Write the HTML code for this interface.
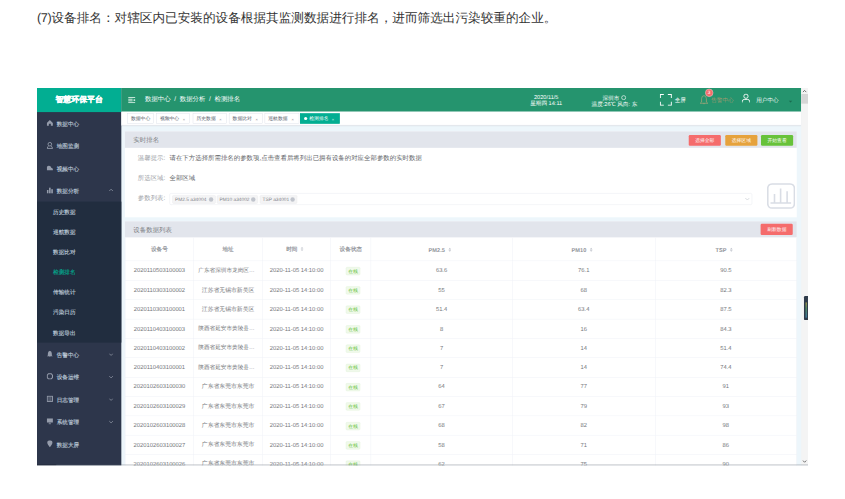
<!DOCTYPE html>
<html><head><meta charset="utf-8">
<style>
*{margin:0;padding:0;box-sizing:border-box}
html,body{width:845px;height:499px;overflow:hidden;background:#fff;font-family:"Liberation Sans",sans-serif;text-rendering:geometricPrecision}
#title{position:absolute;left:37px;top:9.5px;font-size:12.63px;line-height:17px;color:#333;white-space:nowrap}
#ui{position:absolute;left:37px;top:88px;width:1920px;height:940px;transform:scale(0.40156);transform-origin:0 0;overflow:hidden;background:#edf6fb}
.abs{position:absolute}
#side{left:0;top:0;width:210px;height:940px;background:#2d364b}
#logo{left:0;top:0;width:210px;height:60px;background:#02ae92;color:#fff;font-size:19.7px;font-weight:bold;text-align:center;line-height:59px;-webkit-text-stroke:0.7px #fff}
.mi{position:absolute;left:0;width:210px;height:56px;line-height:60px;color:#bfcbd9;font-size:14px;padding-left:49px;white-space:nowrap;-webkit-text-stroke:0.35px #bfcbd9}
.mi .ic{position:absolute;left:24px;line-height:0}
.mi .arr{position:absolute;left:179px;top:23px;line-height:0}
#sub{left:0;top:283px;width:210px;height:351px;background:#212d3f}
.si{position:absolute;left:0;width:210px;height:50px;line-height:53px;color:#bfcbd9;font-size:14px;padding-left:40px;-webkit-text-stroke:0.35px currentColor}
#hdr{left:210px;top:0;width:1693px;height:58.5px;background:#25946e;color:#fff;white-space:nowrap}
#hdr .t{position:absolute;font-size:14px;line-height:15.2px;text-align:center}
#sb{left:1903px;top:0;width:17px;height:940px;background:#f4f4f4}
#tags{left:210px;top:58.5px;width:1693px;height:34px;background:#fff;border-bottom:1px solid #d8dce5;box-shadow:0 1px 3px 0 rgba(0,0,0,.08)}
.tag{position:absolute;top:4px;height:26px;line-height:24px;border:1px solid #d8dce5;color:#495060;background:#fff;font-size:12px;padding:0 0 0 8px;white-space:nowrap}
.tag .x{position:absolute;top:3px;width:16px;text-align:center;font-size:10px;color:#888}
.card{position:absolute;left:219px;width:1673px;background:#fff}
.chd{position:absolute;left:0;top:0;width:100%;height:40.5px;background:#e2e5ec;color:#7a7d82;font-size:16px;line-height:43px;padding-left:21px}
.btn{position:absolute;top:8.5px;width:80px;height:27.4px;border-radius:3px;color:#fff;font-size:12px;line-height:27.4px;text-align:center}
.lbl{position:absolute;left:32px;font-size:16px;color:#a0a3a8;line-height:20px}
.val{position:absolute;left:111px;font-size:16px;color:#606266;line-height:20px;white-space:nowrap}
#sel{position:absolute;left:110.6px;top:153.4px;width:1451px;height:29px;border:1px solid #e4e7ed;border-radius:4px}
.chip{position:absolute;top:4px;height:21px;background:#f4f4f5;border:1px solid #e9e9eb;border-radius:3px;color:#7f8287;font-size:12px;line-height:19px;padding-left:6px;white-space:nowrap}
.chip i{position:absolute;top:4px;width:11px;height:11px;border-radius:50%;background:#c0c4cc}
table{position:absolute;left:0;top:41px;border-collapse:collapse;table-layout:fixed;width:1673px}
td,th{border:1px solid #ebeef5;border-top:0;text-align:center;font-size:14px;color:#606266;font-weight:normal;white-space:nowrap;overflow:hidden;padding:0}
th{height:58.3px;color:#909399;padding-top:2px;-webkit-text-stroke:0.4px #909399}
th.s{font-weight:bold;-webkit-text-stroke:0}
td{height:48.2px;font-size:14.5px;color:#74767a;padding-top:0}
td.ad{text-align:left;padding:0 10px 0 11px;text-overflow:ellipsis;font-size:14px}
.on{display:inline-block;position:relative;left:6px;top:1px;height:20px;line-height:18px;padding:0 5px;border:1px solid #e1f3d8;background:#f0f9eb;color:#67c23a;font-size:12px;border-radius:3px}
.sort{display:inline-block;vertical-align:middle;margin-left:7px;margin-right:7px;margin-top:-2px}
</style></head><body>
<div id="title"><span style="letter-spacing:-0.35px">(7)</span>设备排名：对辖区内已安装的设备根据其监测数据进行排名，进而筛选出污染较重的企业。</div>
<div id="ui">
  <div id="side" class="abs">
    <div id="logo" class="abs">智慧环保平台</div>
<div class="mi" style="top:59px"><span class="ic" style="top:20px"><svg width="16" height="16" viewBox="0 0 16 16"><path d="M8 1 L15.5 8 L15.5 15 L10.5 15 L10.5 10 L5.5 10 L5.5 15 L0.5 15 L0.5 8Z" fill="#959cab"/></svg></span>数据中心</div>
<div class="mi" style="top:115px"><span class="ic" style="top:19px"><svg width="16" height="18" viewBox="0 0 16 18"><circle cx="8" cy="6" r="4.5" fill="none" stroke="#959cab" stroke-width="2.2"/><path d="M1.5 17 Q2 11 5 10.5 M14.5 17 Q14 11 11 10.5 M1.5 16.5 H14.5" fill="none" stroke="#959cab" stroke-width="2.2"/></svg></span>地图监测</div>
<div class="mi" style="top:171px"><span class="ic" style="top:20px"><svg width="16" height="16" viewBox="0 0 16 16"><path d="M0.5 14 L0.5 6 Q3 1.5 8 3 Q11 4 11 7 L15.5 10 L15.5 14Z" fill="#959cab"/></svg></span>视频中心</div>
<div class="mi" style="top:227px"><span class="ic" style="top:20px"><svg width="16" height="16" viewBox="0 0 16 16"><rect x="0.5" y="7" width="4" height="9" fill="#959cab"/><rect x="6" y="1" width="4" height="15" fill="#959cab"/><rect x="11.5" y="5" width="4" height="11" fill="#959cab"/></svg></span>数据分析<span class="arr"><svg width="11" height="8" viewBox="0 0 11 8"><path d="M1 6.5 L5.5 2 L10 6.5" fill="none" stroke="#959cab" stroke-width="1.8"/></svg></span></div>
<div id="sub" class="abs"><div class="si" style="top:0px">历史数据</div><div class="si" style="top:50px">巡航数据</div><div class="si" style="top:100px">数据比对</div><div class="si" style="top:150px;color:#02ae92">检测排名</div><div class="si" style="top:200px">传输统计</div><div class="si" style="top:250px">污染日历</div><div class="si" style="top:300px">数据导出</div></div>
<div class="mi" style="top:634px"><span class="ic" style="top:20px"><svg width="16" height="16" viewBox="0 0 16 16"><path d="M8 0.5 Q13 1.5 13 8 L13 12 L15.5 14 L0.5 14 L3 12 L3 8 Q3 1.5 8 0.5Z M6 14.5 L10 14.5 L8 16Z" fill="#959cab"/></svg></span>告警中心<span class="arr"><svg width="11" height="11" viewBox="0 0 11 11"><path d="M1 4.5 L5.5 9 L10 4.5" fill="none" stroke="#959cab" stroke-width="1.8"/></svg></span></div>
<div class="mi" style="top:690px"><span class="ic" style="top:20px"><svg width="16" height="16" viewBox="0 0 16 16"><path d="M4.5 1.5 H11.5 L14.5 5 V11 L11.5 14.5 H4.5 L1.5 11 V5Z" fill="none" stroke="#959cab" stroke-width="2.6"/></svg></span>设备运维<span class="arr"><svg width="11" height="11" viewBox="0 0 11 11"><path d="M1 4.5 L5.5 9 L10 4.5" fill="none" stroke="#959cab" stroke-width="1.8"/></svg></span></div>
<div class="mi" style="top:746px"><span class="ic" style="top:20px"><svg width="16" height="16" viewBox="0 0 16 16"><rect x="1.5" y="1.5" width="13" height="13" fill="none" stroke="#959cab" stroke-width="2.4"/><path d="M6 2 V14 M10.5 2 V14" stroke="#959cab" stroke-width="1.6"/></svg></span>日志管理<span class="arr"><svg width="11" height="11" viewBox="0 0 11 11"><path d="M1 4.5 L5.5 9 L10 4.5" fill="none" stroke="#959cab" stroke-width="1.8"/></svg></span></div>
<div class="mi" style="top:802px"><span class="ic" style="top:20px"><svg width="16" height="16" viewBox="0 0 16 16"><rect x="0.5" y="1" width="15" height="10" fill="#959cab"/><path d="M5 14.5 H11 M8 11 V14" stroke="#959cab" stroke-width="2"/></svg></span>系统管理<span class="arr"><svg width="11" height="11" viewBox="0 0 11 11"><path d="M1 4.5 L5.5 9 L10 4.5" fill="none" stroke="#959cab" stroke-width="1.8"/></svg></span></div>
<div class="mi" style="top:858px"><span class="ic" style="top:19px"><svg width="16" height="18" viewBox="0 0 16 18"><path d="M8 17.5 Q2 11 1.5 7 Q1.5 0.5 8 0.5 Q14.5 0.5 14.5 7 Q14 11 8 17.5Z" fill="#959cab"/></svg></span>数据大屏</div>
  </div>
  <div id="hdr" class="abs">
    <svg class="abs" style="left:17px;top:22px" width="18" height="16" viewBox="0 0 18 16"><path d="M0 1.5 H18 M0 14.5 H18 M0 6 H11 M0 10 H11" stroke="#d5ede4" stroke-width="2.4"/><rect x="13.5" y="6" width="4.5" height="4.5" fill="#c4e6d9"/></svg>
    <div class="abs" style="left:59px;top:18px;font-size:16px;line-height:22px">数据中心<span style="margin:0 9px">/</span>数据分析<span style="margin:0 9px">/</span>检测排名</div>
    <div class="t" style="left:998px;width:120px;top:16px">2020/11/5<br>星期四 14:11</div>
    <div class="t" style="left:1128px;width:200px;top:16px">深圳市 <svg width="14" height="14" viewBox="0 0 14 14" style="vertical-align:-1px"><circle cx="7" cy="8" r="5" fill="none" stroke="#fff" stroke-width="1.6"/></svg><br>温度:26℃ 风向: 东</div>
    <svg class="abs" style="left:1341px;top:14.5px" width="30" height="29" viewBox="0 0 30 29"><path d="M1.2 10 V1.2 H10 M20 1.2 H28.8 V10 M28.8 19 V27.8 H20 M10 27.8 H1.2 V19" fill="none" stroke="#fff" stroke-width="2.6"/></svg>
    <div class="abs" style="left:1378px;top:22px;font-size:14px;line-height:18px">全屏</div>
    <svg class="abs" style="left:1440px;top:17px" width="22" height="24" viewBox="0 0 22 24"><path d="M11 2 Q17 2.5 17 10 V18 L20.5 21 H1.5 L5 18 V10 Q5 2.5 11 2Z M9 22 Q11 24 13 22" fill="none" stroke="#b9a87c" stroke-width="1.6"/></svg>
    <svg class="abs" style="left:1452px;top:0px" width="24" height="24" viewBox="0 0 24 24"><circle cx="12" cy="12" r="9.5" fill="#f56c6c" stroke="#f3d6d6" stroke-width="1.2"/><text x="12" y="16" font-size="12" fill="#fff" text-anchor="middle" font-family="Liberation Sans">3</text></svg>
    <div class="abs" style="left:1469px;top:21px;font-size:14px;line-height:18px;color:#a59a6e">告警中心</div>
    <svg class="abs" style="left:1545px;top:14px" width="21" height="23" viewBox="0 0 21 23"><circle cx="10.5" cy="6.5" r="5.3" fill="none" stroke="#fff" stroke-width="2.2"/><path d="M1.5 22 V19 Q1.5 14.5 6 14.5 H15 Q19.5 14.5 19.5 19 V22" fill="none" stroke="#fff" stroke-width="2.2"/></svg>
    <div class="abs" style="left:1581px;top:19.5px;font-size:14px;line-height:18px">用户中心</div>
    <svg class="abs" style="left:1662px;top:31px" width="9" height="6" viewBox="0 0 9 6"><path d="M0 0 H9 L4.5 6Z" fill="#1a6b50"/></svg>
  </div>
  <div id="tags" class="abs">
    <div class="tag" style="left:15px;width:66px">数据中心</div>
    <div class="tag" style="left:87px;width:84px">视频中心<span class="x" style="left:60px">×</span></div>
    <div class="tag" style="left:178px;width:84px">历史数据<span class="x" style="left:60px">×</span></div>
    <div class="tag" style="left:268px;width:84px">数据比对<span class="x" style="left:60px">×</span></div>
    <div class="tag" style="left:357px;width:86px">巡航数据<span class="x" style="left:61px">×</span></div>
    <div class="tag" style="left:445px;width:99px;background:#02ae92;border-color:#02ae92;color:#fff;padding-left:22px"><i style="position:absolute;left:9px;top:8px;width:8px;height:8px;border-radius:50%;background:#fff"></i>检测排名<span class="x" style="left:73px;color:#e0f5f0">×</span></div>
  </div>
  <div class="card" style="top:108.3px;height:213.7px">
    <div class="chd">实时排名
      <div class="btn" style="left:1404px;background:#f56c6c">选择全部</div>
      <div class="btn" style="left:1495px;background:#e6a23c">选择区域</div>
      <div class="btn" style="left:1584px;background:#67c23a">开始查看</div>
    </div>
    <div class="lbl" style="top:57px">温馨提示:</div><div class="val" style="top:57px">请在下方选择所需排名的参数项,点击查看后将列出已拥有设备的对应全部参数的实时数据</div>
    <div class="lbl" style="top:106px">所选区域:</div><div class="val" style="top:106px">全部区域</div>
    <div class="lbl" style="top:157px">参数列表:</div>
    <div id="sel">
      <div class="chip" style="left:6px;width:108px">PM2.5 a34004<i style="left:90px"></i></div>
      <div class="chip" style="left:117px;width:102px">PM10 a34002<i style="left:84px"></i></div>
      <div class="chip" style="left:224px;width:93px">TSP a34001<i style="left:75px"></i></div>
      <svg class="abs" style="left:1432px;top:10px" width="12" height="8" viewBox="0 0 12 8"><path d="M1 1 L6 6 L11 1" fill="none" stroke="#c0c4cc" stroke-width="1.5"/></svg>
    </div>
    <svg class="abs" style="left:1599px;top:129px" width="70" height="64" viewBox="0 0 70 64"><rect x="1.8" y="1.8" width="66.4" height="60.4" rx="11" fill="none" stroke="#d9dde5" stroke-width="4"/><path d="M18.6 49.5 V27 M33.8 49.5 V13.5 M50 49.5 V20 M8.6 49.5 H60" stroke="#d9dde5" stroke-width="4"/></svg>
  </div>
  <div class="card" style="top:331.7px;height:700px">
    <div class="chd">设备数据列表
      <div class="btn" style="left:1583.4px;top:6.5px;background:#f56c6c">刷新数据</div>
    </div>
    <table>
      <colgroup><col style="width:170.7px"><col style="width:171.3px"><col style="width:170px"><col style="width:99.7px"><col style="width:352.6px"><col style="width:355.6px"><col></colgroup>
      <tr><th>设备号</th><th>地址</th><th class="s">时间<svg class="sort" width="10" height="14" viewBox="0 0 10 14"><path d="M1.5 6 L5 2 L8.5 6Z M1.5 8 L5 12 L8.5 8Z" fill="#c0c4cc"/></svg></th><th>设备状态</th><th class="s">PM2.5<svg class="sort" width="10" height="14" viewBox="0 0 10 14"><path d="M1.5 6 L5 2 L8.5 6Z M1.5 8 L5 12 L8.5 8Z" fill="#c0c4cc"/></svg></th><th class="s">PM10<svg class="sort" width="10" height="14" viewBox="0 0 10 14"><path d="M1.5 6 L5 2 L8.5 6Z M1.5 8 L5 12 L8.5 8Z" fill="#c0c4cc"/></svg></th><th class="s">TSP<svg class="sort" width="10" height="14" viewBox="0 0 10 14"><path d="M1.5 6 L5 2 L8.5 6Z M1.5 8 L5 12 L8.5 8Z" fill="#c0c4cc"/></svg></th></tr>
<tr><td>2020110503100003</td><td class="ad">广东省深圳市龙岗区龙城街道</td><td>2020-11-05 14:10:00</td><td><span class="on">在线</span></td><td>63.6</td><td>76.1</td><td>90.5</td></tr>
<tr><td>2020110303100002</td><td>江苏省无锡市新吴区</td><td>2020-11-05 14:10:00</td><td><span class="on">在线</span></td><td>55</td><td>68</td><td>82.3</td></tr>
<tr><td>2020110303100001</td><td>江苏省无锡市新吴区</td><td>2020-11-05 14:10:00</td><td><span class="on">在线</span></td><td>51.4</td><td>63.4</td><td>87.5</td></tr>
<tr><td>2020110403100003</td><td class="ad">陕西省延安市黄陵县店头镇</td><td>2020-11-05 14:10:00</td><td><span class="on">在线</span></td><td>8</td><td>16</td><td>84.3</td></tr>
<tr><td>2020110403100002</td><td class="ad">陕西省延安市黄陵县店头镇</td><td>2020-11-05 14:10:00</td><td><span class="on">在线</span></td><td>7</td><td>14</td><td>51.4</td></tr>
<tr><td>2020110403100001</td><td class="ad">陕西省延安市黄陵县店头镇</td><td>2020-11-05 14:10:00</td><td><span class="on">在线</span></td><td>7</td><td>14</td><td>74.4</td></tr>
<tr><td>2020102603100030</td><td>广东省东莞市东莞市</td><td>2020-11-05 14:10:00</td><td><span class="on">在线</span></td><td>64</td><td>77</td><td>91</td></tr>
<tr><td>2020102603100029</td><td>广东省东莞市东莞市</td><td>2020-11-05 14:10:00</td><td><span class="on">在线</span></td><td>67</td><td>79</td><td>93</td></tr>
<tr><td>2020102603100028</td><td>广东省东莞市东莞市</td><td>2020-11-05 14:10:00</td><td><span class="on">在线</span></td><td>68</td><td>82</td><td>98</td></tr>
<tr><td>2020102603100027</td><td>广东省东莞市东莞市</td><td>2020-11-05 14:10:00</td><td><span class="on">在线</span></td><td>58</td><td>71</td><td>86</td></tr>
<tr><td>2020102603100026</td><td>广东省东莞市东莞市</td><td>2020-11-05 14:10:00</td><td><span class="on">在线</span></td><td>62</td><td>75</td><td>90</td></tr>
<tr><td>2020102603100025</td><td>广东省东莞市东莞市</td><td>2020-11-05 14:10:00</td><td><span class="on">在线</span></td><td>60</td><td>73</td><td>88</td></tr>
    </table>
  </div>
  <div id="sb" class="abs">
    <svg class="abs" style="left:3px;top:4px" width="11" height="8" viewBox="0 0 11 8"><path d="M1 6.5 L5.5 2 L10 6.5" fill="none" stroke="#505050" stroke-width="2"/></svg>
    <div class="abs" style="left:0;top:15.2px;width:17px;height:24px;background:#d6d6d6"></div>
    <svg class="abs" style="left:3px;top:926px" width="11" height="8" viewBox="0 0 11 8"><path d="M1 1.5 L5.5 6 L10 1.5" fill="none" stroke="#505050" stroke-width="2"/></svg>
  </div>
  <div class="abs" style="left:210px;top:937.6px;width:1710px;height:2.4px;background:#959aa3"></div>
  <div class="abs" style="left:0;top:937.6px;width:48px;height:2.4px;background:#1e2433"></div>
  <div class="abs" style="left:48px;top:937.6px;width:162px;height:2.4px;background:#434a5c"></div>
  <div class="abs" style="left:1910px;top:518px;width:10px;height:60px;background:#2f3b4a;border-radius:3px 0 0 3px"><div class="abs" style="left:3.5px;top:16px;width:3px;height:38px;background:linear-gradient(#b6a44a,#5a9a6a 40%,#3f86b0)"></div></div>
</div>
</body></html>
